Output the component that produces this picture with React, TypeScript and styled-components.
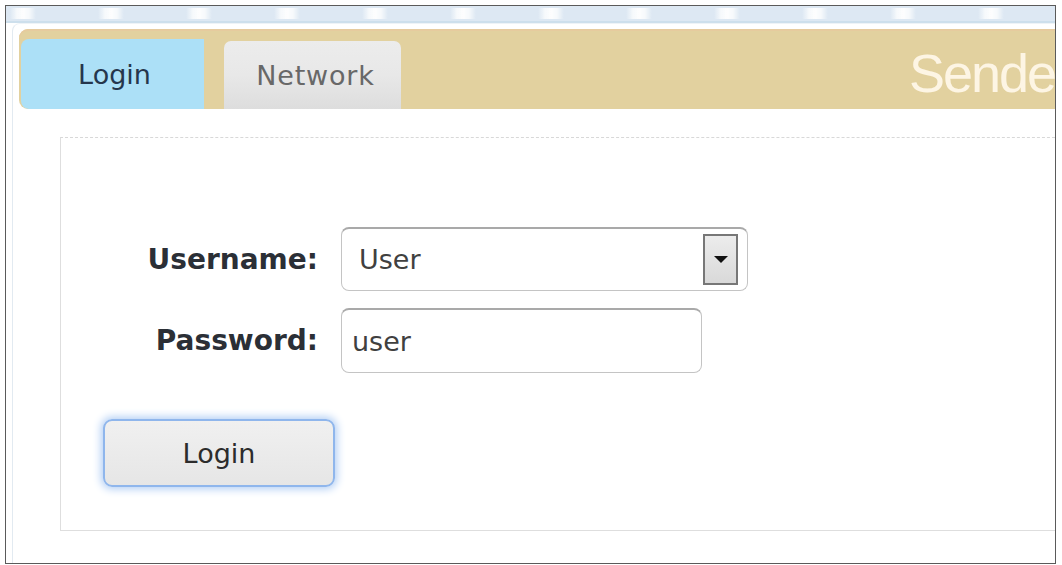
import React from "react";
import styled, { createGlobalStyle } from "styled-components";

const GlobalStyle = createGlobalStyle`
  html, body {
    margin: 0;
    padding: 0;
    background: #ffffff;
  }
  body {
    font-family: "DejaVu Sans", Verdana, sans-serif;
  }
`;

const Frame = styled.div`
  margin: 5px 0 0 5px;
  width: 1049px;
  height: 557px;
  border: 1px solid #5a5a5a;
  background: #ffffff;
  overflow: hidden;
  display: flex;
  flex-direction: column;
`;

const TopStrip = styled.div`
  height: 15px;
  flex: none;
  border-bottom: 2px solid #cddfec;
  background-color: #dde8f3;
  background-image: linear-gradient(
    90deg,
    rgba(255, 255, 255, 0) 0px,
    rgba(255, 255, 255, 0) 4px,
    rgba(255, 255, 255, 0.75) 11px,
    rgba(255, 255, 255, 0.95) 17px,
    rgba(255, 255, 255, 0.75) 23px,
    rgba(255, 255, 255, 0) 30px,
    rgba(255, 255, 255, 0) 88px
  );
  background-size: 88px 11px;
  background-repeat: repeat-x;
  background-position: 0px 2px;
`;

const Panel = styled.div`
  margin: 0 0 0 6px;
  flex: 1;
  border-left: 1px solid #e2eaf1;
  border-top: 1px solid #eef3f7;
  border-radius: 8px 0 0 0;
  padding: 5px 0 0 6px;
  display: flex;
  flex-direction: column;
  min-width: 0;
`;

const TabBar = styled.div`
  height: 80px;
  flex: none;
  background: #e2d19f;
  box-shadow: inset 0 2px 0 #e6cb9e;
  border-radius: 9px 0 0 9px;
  padding-left: 2px;
  display: flex;
  align-items: flex-end;
  gap: 20px;
  position: relative;
  overflow: hidden;
`;

const Tab = styled.div<{ $active?: boolean }>`
  width: ${(p) => (p.$active ? "183px" : "177px")};
  height: ${(p) => (p.$active ? "70px" : "68px")};
  border-radius: ${(p) => (p.$active ? "8px 0 0 8px" : "7px 7px 0 0")};
  background: ${(p) =>
    p.$active
      ? "#ace0f7"
      : "linear-gradient(#ececec 0%, #e8e8e8 50%, #dddddd 100%)"};
  color: ${(p) => (p.$active ? "#25364c" : "#686868")};
  font-size: 27px;
  letter-spacing: ${(p) => (p.$active ? "0" : "0.8px")};
  display: flex;
  align-items: center;
  justify-content: center;
  padding-left: ${(p) => (p.$active ? "4px" : "6px")};
  box-sizing: border-box;
`;

const Brand = styled.div`
  position: absolute;
  left: 890px;
  top: 17px;
  font-family: "Liberation Sans", Arial, sans-serif;
  font-size: 54px;
  line-height: 1;
  letter-spacing: -2px;
  color: #fdf5e4;
  white-space: nowrap;
`;

const Body = styled.div`
  flex: 1;
  padding: 28px 0 32px 41px;
  display: flex;
  min-width: 0;
`;

const FormBox = styled.div`
  flex: 1;
  margin-right: -20px;
  border: 1px solid #dedede;
  border-top: 1px dashed #d8d8d8;
  display: flex;
  flex-direction: column;
  padding: 89px 0 0 0;
  gap: 17px;
`;

const Row = styled.div`
  display: grid;
  grid-template-columns: 257px auto;
  column-gap: 23px;
  align-items: center;
`;

const Label = styled.label`
  text-align: right;
  font-weight: bold;
  font-size: 28px;
  color: #2b2f36;
`;

const SelectBox = styled.div`
  width: 407px;
  height: 64px;
  box-sizing: border-box;
  border: 1px solid #c4c4c4;
  border-top: 2px solid #a9a9a9;
  border-radius: 8px;
  background: #ffffff;
  display: flex;
  align-items: center;
  justify-content: space-between;
  padding: 0 9px 0 17px;
  font-size: 27px;
  color: #404040;
`;

const ArrowButton = styled.span`
  width: 35px;
  height: 51px;
  box-sizing: border-box;
  border: 2px solid #777777;
  background: linear-gradient(#ececec, #d9d9d9);
  display: flex;
  align-items: center;
  justify-content: center;

  &::after {
    content: "";
    border-left: 7px solid transparent;
    border-right: 7px solid transparent;
    border-top: 7px solid #111111;
  }
`;

const TextInput = styled.input`
  width: 361px;
  height: 65px;
  box-sizing: border-box;
  border: 1px solid #c4c4c4;
  border-top: 2px solid #a9a9a9;
  border-radius: 8px;
  background: #ffffff;
  padding: 0 10px;
  font-family: "DejaVu Sans", Verdana, sans-serif;
  font-size: 27px;
  color: #404040;
  outline: none;
`;

const ButtonRow = styled.div`
  padding: 29px 0 0 42px;
`;

const LoginButton = styled.button`
  width: 232px;
  height: 68px;
  border: 2px solid #8fb6ec;
  border-radius: 9px;
  background: linear-gradient(#f0f0f0, #e6e6e6);
  box-shadow: 0 0 8px 2px #b0cdf4;
  font-family: "DejaVu Sans", Verdana, sans-serif;
  font-size: 27px;
  color: #2c2c2c;
  cursor: pointer;
`;

export default function App() {
  return (
    <>
      <GlobalStyle />
      <Frame>
        <TopStrip />
        <Panel>
          <TabBar>
            <Tab $active>Login</Tab>
            <Tab>Network</Tab>
            <Brand>Sender</Brand>
          </TabBar>
          <Body>
            <FormBox>
              <Row>
                <Label>Username:</Label>
                <SelectBox>
                  <span>User</span>
                  <ArrowButton />
                </SelectBox>
              </Row>
              <Row>
                <Label>Password:</Label>
                <TextInput type="text" value="user" readOnly />
              </Row>
              <ButtonRow>
                <LoginButton type="button">Login</LoginButton>
              </ButtonRow>
            </FormBox>
          </Body>
        </Panel>
      </Frame>
    </>
  );
}
